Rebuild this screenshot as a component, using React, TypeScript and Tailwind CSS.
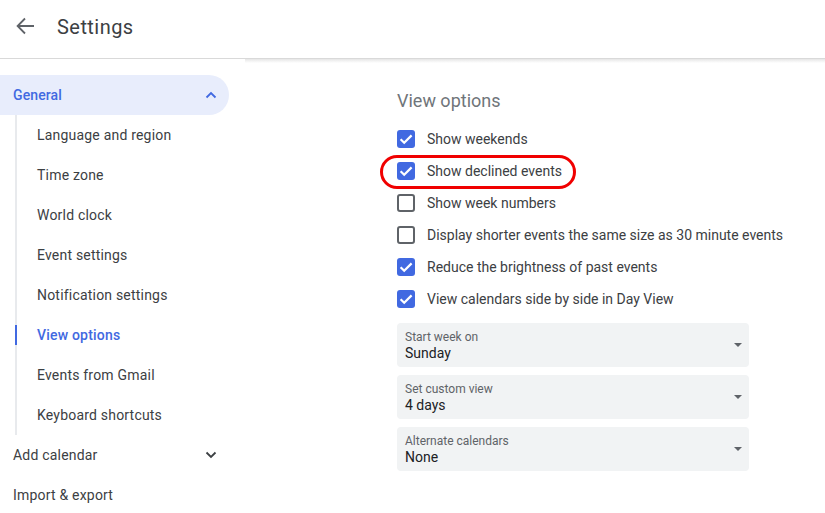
import React from "react";

const sans = "[font-family:Roboto,'Liberation_Sans',sans-serif]";

function Check({ on }: { on: boolean }) {
  return on ? (
    <span className="flex h-[18px] w-[18px] shrink-0 items-center justify-center rounded-[3px] bg-[#4169e1]">
      <svg width="18" height="18" viewBox="0 0 18 18" fill="none">
        <path d="M3.6 9.2 L7.2 12.8 L14.6 5.4" stroke="#fff" strokeWidth="2.2" />
      </svg>
    </span>
  ) : (
    <span className="h-[18px] w-[18px] shrink-0 rounded-[3px] border-2 border-[#5f6368]" />
  );
}

function Option({ on, label, circled }: { on: boolean; label: string; circled?: boolean }) {
  return (
    <div className="relative flex h-8 items-center gap-[12px] text-[14px] text-[#3c4043]">
      <Check on={on} />
      <span className="whitespace-nowrap">{label}</span>
      {circled && (
        <span className="absolute left-[-17px] top-0 h-[34px] w-[196px] rounded-[18px] border-[3px] border-[#f00000]" />
      )}
    </div>
  );
}

function Select({ label, value }: { label: string; value: string }) {
  return (
    <div className="relative flex h-11 w-[352px] flex-col justify-center rounded-[4px] bg-[#f1f3f4] px-2 pt-[2px]">
      <div className="text-[12px] leading-[15px] text-[#5f6368]">{label}</div>
      <div className="text-[14px] leading-[17px] text-[#202124]">{value}</div>
      <span className="absolute right-[7px] top-[20px] h-0 w-0 border-x-[4px] border-t-[4px] border-x-transparent border-t-[#5f6368]" />
    </div>
  );
}

function SubItem({ label, active }: { label: string; active?: boolean }) {
  return (
    <div
      className={
        "relative flex h-10 items-center pl-[20px] text-[14px] tracking-[0.2px] " +
        (active ? "font-medium text-[#4169e1]" : "text-[#3c4043]")
      }
    >
      {active && <span className="absolute left-[-2px] top-[10px] h-5 w-[2px] bg-[#4169e1]" />}
      {label}
    </div>
  );
}

function Chevron({ up, color }: { up?: boolean; color: string }) {
  return (
    <svg width="12" height="8" viewBox="0 0 12 8" fill="none">
      <path d={up ? "M1.5 6.5 L6 2 L10.5 6.5" : "M1.5 1.5 L6 6 L10.5 1.5"} stroke={color} strokeWidth="1.8" />
    </svg>
  );
}

export default function App() {
  const subs = ["Language and region", "Time zone", "World clock", "Event settings", "Notification settings"];
  return (
    <div className={`${sans} h-[513px] w-[825px] overflow-hidden bg-white`}>
      <header className="relative flex h-[59px] items-center border-b border-[#d9d9d9]">
        <svg className="ml-[16px] mt-[-6px]" width="18" height="18" viewBox="0 0 18 18" fill="none">
          <path d="M18 9 H2 M9 1.5 L1.6 9 L9 16.5" stroke="#5f6368" strokeWidth="1.8" />
        </svg>
        <h1 className="ml-[23px] mt-[-4px] text-[20px] font-normal text-[#3c4043] tracking-[0.45px]">Settings</h1>
        <span className="absolute left-[245px] right-0 top-[59px] h-[4px] bg-gradient-to-b from-[#e6e6e6] to-white" />
      </header>
      <div className="flex">
        <nav className="w-[229px] shrink-0 pt-[16px]">
          <div className="flex h-10 items-center justify-between rounded-r-[20px] bg-[#e8edfc] pl-[13px] pr-[12px] text-[14px] font-medium tracking-[0.1px] text-[#4169e1]">
            General
            <Chevron up color="#4169e1" />
          </div>
          <div className="ml-[15px] border-l-2 border-[#e8eaed]">
            {subs.map((s) => (
              <SubItem key={s} label={s} />
            ))}
            <SubItem label="View options" active />
            <SubItem label="Events from Gmail" />
            <SubItem label="Keyboard shortcuts" />
          </div>
          <div className="flex h-10 items-center justify-between pl-[13px] pr-[12px] text-[14px] tracking-[0.2px] text-[#3c4043]">
            Add calendar
            <Chevron color="#3c4043" />
          </div>
          <div className="flex h-10 items-center pl-[13px] text-[14px] tracking-[0.2px] text-[#3c4043]">Import &amp; export</div>
        </nav>
        <main className="ml-[168px] pt-[30px]">
          <h2 className="mb-[10px] text-[18px] leading-6 font-normal text-[#70757a]">View options</h2>
          <Option on label="Show weekends" />
          <Option on label="Show declined events" circled />
          <Option on={false} label="Show week numbers" />
          <Option on={false} label="Display shorter events the same size as 30 minute events" />
          <Option on label="Reduce the brightness of past events" />
          <Option on label="View calendars side by side in Day View" />
          <div className="mt-[8px] flex flex-col gap-2">
            <Select label="Start week on" value="Sunday" />
            <Select label="Set custom view" value="4 days" />
            <Select label="Alternate calendars" value="None" />
          </div>
        </main>
      </div>
    </div>
  );
}
